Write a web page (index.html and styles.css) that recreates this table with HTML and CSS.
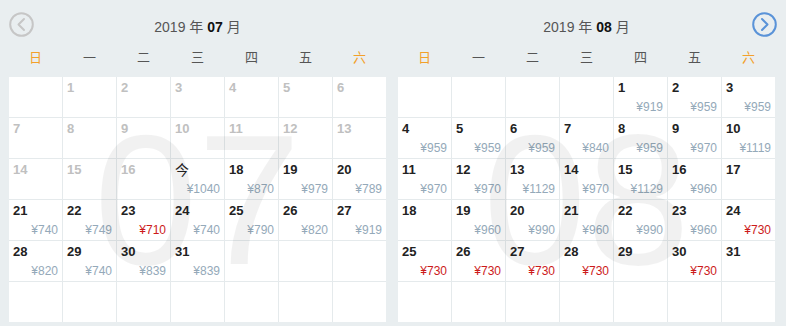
FILE: index.html
```html
<!DOCTYPE html>
<html lang="zh-CN">
<head>
<meta charset="utf-8">
<title>价格日历</title>
<link rel="stylesheet" href="styles.css">
</head>
<body>
<div class="calendar">
  <section class="month">
    <header class="month-head">
      <button class="nav nav-prev" aria-label="上个月">
        <svg width="25" height="25" viewBox="0 0 25 25"><circle cx="12.5" cy="12.5" r="11.3" fill="none" stroke="#c6c6c6" stroke-width="2"/><path d="M15 7 L9.5 12.5 L15 18" fill="none" stroke="#c6c6c6" stroke-width="2" stroke-linecap="round" stroke-linejoin="round"/></svg>
      </button>
      <h2 class="month-title">2019 年 <b>07</b> 月</h2>
      <span class="nav-spacer"></span>
    </header>
    <div class="weekdays"><span class="weekend">日</span><span>一</span><span>二</span><span>三</span><span>四</span><span>五</span><span class="weekend">六</span></div>
    <div class="days">
      <div class="day empty"></div>
      <div class="day past"><span class="num">1</span></div>
      <div class="day past"><span class="num">2</span></div>
      <div class="day past"><span class="num">3</span></div>
      <div class="day past"><span class="num">4</span></div>
      <div class="day past"><span class="num">5</span></div>
      <div class="day past"><span class="num">6</span></div>
      <div class="day past"><span class="num">7</span></div>
      <div class="day past"><span class="num">8</span></div>
      <div class="day past"><span class="num">9</span></div>
      <div class="day past"><span class="num">10</span></div>
      <div class="day past"><span class="num">11</span></div>
      <div class="day past"><span class="num">12</span></div>
      <div class="day past"><span class="num">13</span></div>
      <div class="day past"><span class="num">14</span></div>
      <div class="day past"><span class="num">15</span></div>
      <div class="day past"><span class="num">16</span></div>
      <div class="day today"><span class="num">今</span><span class="price">¥1040</span></div>
      <div class="day"><span class="num">18</span><span class="price">¥870</span></div>
      <div class="day"><span class="num">19</span><span class="price">¥979</span></div>
      <div class="day"><span class="num">20</span><span class="price">¥789</span></div>
      <div class="day"><span class="num">21</span><span class="price">¥740</span></div>
      <div class="day"><span class="num">22</span><span class="price">¥749</span></div>
      <div class="day"><span class="num">23</span><span class="price low">¥710</span></div>
      <div class="day"><span class="num">24</span><span class="price">¥740</span></div>
      <div class="day"><span class="num">25</span><span class="price">¥790</span></div>
      <div class="day"><span class="num">26</span><span class="price">¥820</span></div>
      <div class="day"><span class="num">27</span><span class="price">¥919</span></div>
      <div class="day"><span class="num">28</span><span class="price">¥820</span></div>
      <div class="day"><span class="num">29</span><span class="price">¥740</span></div>
      <div class="day"><span class="num">30</span><span class="price">¥839</span></div>
      <div class="day"><span class="num">31</span><span class="price">¥839</span></div>
      <div class="day empty"></div>
      <div class="day empty"></div>
      <div class="day empty"></div>
      <div class="day empty"></div>
      <div class="day empty"></div>
      <div class="day empty"></div>
      <div class="day empty"></div>
      <div class="day empty"></div>
      <div class="day empty"></div>
      <div class="day empty"></div>
      <div class="watermark">07</div>
    </div>
  </section>

  <section class="month">
    <header class="month-head">
      <span class="nav-spacer"></span>
      <h2 class="month-title">2019 年 <b>08</b> 月</h2>
      <button class="nav nav-next" aria-label="下个月">
        <svg width="25" height="25" viewBox="0 0 25 25"><circle cx="12.5" cy="12.5" r="11.3" fill="none" stroke="#5a93d8" stroke-width="2"/><path d="M10 7 L15.5 12.5 L10 18" fill="none" stroke="#5a93d8" stroke-width="2" stroke-linecap="round" stroke-linejoin="round"/></svg>
      </button>
    </header>
    <div class="weekdays"><span class="weekend">日</span><span>一</span><span>二</span><span>三</span><span>四</span><span>五</span><span class="weekend">六</span></div>
    <div class="days">
      <div class="day empty"></div>
      <div class="day empty"></div>
      <div class="day empty"></div>
      <div class="day empty"></div>
      <div class="day"><span class="num">1</span><span class="price">¥919</span></div>
      <div class="day"><span class="num">2</span><span class="price">¥959</span></div>
      <div class="day"><span class="num">3</span><span class="price">¥959</span></div>
      <div class="day"><span class="num">4</span><span class="price">¥959</span></div>
      <div class="day"><span class="num">5</span><span class="price">¥959</span></div>
      <div class="day"><span class="num">6</span><span class="price">¥959</span></div>
      <div class="day"><span class="num">7</span><span class="price">¥840</span></div>
      <div class="day"><span class="num">8</span><span class="price">¥959</span></div>
      <div class="day"><span class="num">9</span><span class="price">¥970</span></div>
      <div class="day"><span class="num">10</span><span class="price">¥1119</span></div>
      <div class="day"><span class="num">11</span><span class="price">¥970</span></div>
      <div class="day"><span class="num">12</span><span class="price">¥970</span></div>
      <div class="day"><span class="num">13</span><span class="price">¥1129</span></div>
      <div class="day"><span class="num">14</span><span class="price">¥970</span></div>
      <div class="day"><span class="num">15</span><span class="price">¥1129</span></div>
      <div class="day"><span class="num">16</span><span class="price">¥960</span></div>
      <div class="day"><span class="num">17</span></div>
      <div class="day"><span class="num">18</span></div>
      <div class="day"><span class="num">19</span><span class="price">¥960</span></div>
      <div class="day"><span class="num">20</span><span class="price">¥990</span></div>
      <div class="day"><span class="num">21</span><span class="price">¥960</span></div>
      <div class="day"><span class="num">22</span><span class="price">¥990</span></div>
      <div class="day"><span class="num">23</span><span class="price">¥960</span></div>
      <div class="day"><span class="num">24</span><span class="price low">¥730</span></div>
      <div class="day"><span class="num">25</span><span class="price low">¥730</span></div>
      <div class="day"><span class="num">26</span><span class="price low">¥730</span></div>
      <div class="day"><span class="num">27</span><span class="price low">¥730</span></div>
      <div class="day"><span class="num">28</span><span class="price low">¥730</span></div>
      <div class="day"><span class="num">29</span></div>
      <div class="day"><span class="num">30</span><span class="price low">¥730</span></div>
      <div class="day"><span class="num">31</span></div>
      <div class="day empty"></div>
      <div class="day empty"></div>
      <div class="day empty"></div>
      <div class="day empty"></div>
      <div class="day empty"></div>
      <div class="day empty"></div>
      <div class="day empty"></div>
      <div class="watermark">08</div>
    </div>
  </section>
</div>
</body>
</html>
```

FILE: styles.css
```css
html, body {
  margin: 0;
  padding: 0;
}

body {
  background: #e9eef0;
  font-family: "Liberation Sans", "Noto Sans CJK SC", sans-serif;
  color: #222;
}

.calendar {
  display: flex;
  gap: 12px;
  padding: 0 11px 0 9px;
}

.month {
  width: 377px;
  flex: none;
}

.month-head {
  display: grid;
  grid-template-columns: 25px 1fr 25px;
  align-items: start;
  height: 48px;
}

.nav {
  display: block;
  width: 25px;
  height: 25px;
  margin-top: 12px;
  padding: 0;
  border: 0;
  background: none;
  cursor: pointer;
}

.nav svg {
  display: block;
}

.nav-next {
  margin-right: -2px;
  justify-self: end;
}

.month-title {
  margin: 17px 0 0;
  font-size: 14px;
  font-weight: normal;
  line-height: 20px;
  text-align: center;
  color: #555;
}

.month-title b {
  color: #111;
  font-weight: bold;
}

.weekdays {
  display: grid;
  grid-template-columns: repeat(7, 53px);
  column-gap: 1px;
  margin-bottom: 9px;
  font-size: 13px;
  line-height: 20px;
  text-align: center;
  color: #555;
}

.weekend {
  color: #f3a02a;
}

.days {
  position: relative;
  display: grid;
  grid-template-columns: repeat(7, 53px);
  grid-auto-rows: 40px;
  gap: 1px;
  background: #e5eaec;
}

.day {
  display: flex;
  flex-direction: column;
  justify-content: space-between;
  padding: 3px 4px 3px 4px;
  background: #fff;
  min-width: 0;
}

.num {
  font-size: 13px;
  font-weight: bold;
  line-height: 16px;
  color: #222;
}

.past .num {
  color: #c0c0c0;
}

.today .num {
  font-weight: normal;
  font-size: 14px;
  color: #222;
}

.price {
  align-self: flex-end;
  font-size: 12px;
  line-height: 14px;
  color: #94a9b9;
}

.price.low {
  color: #cc1a1a;
}

.watermark {
  position: absolute;
  inset: 0;
  display: flex;
  align-items: center;
  justify-content: center;
  font-size: 186px;
  line-height: 1;
  color: rgba(0, 0, 0, 0.055);
  pointer-events: none;
}
```
